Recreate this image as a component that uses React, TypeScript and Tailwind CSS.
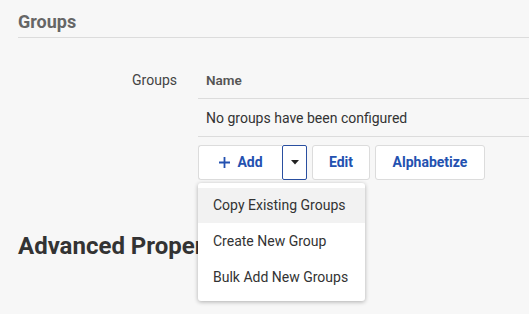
import React from "react";

export default function App() {
  const font = { fontFamily: "Roboto, 'Noto Sans', sans-serif" };
  return (
    <div className="w-[529px] h-[314px] overflow-hidden bg-[#f7f7f7] relative" style={font}>
      <div className="pl-[18px] pt-[10px]">
        <div className="border-b border-[#dcdcdc] pb-[3px]">
          <h2 className="text-[18px] leading-[24px] font-bold text-[#666]">Groups</h2>
        </div>
        <div className="flex mt-[24px]">
          <div className="w-[159px] text-right text-[14px] leading-[20px] text-[#444] pt-[8px]">Groups</div>
          <div className="ml-[21px] flex-1">
            <div className="border-b border-[#dcdcdc] h-[37px] pl-[8px] pt-[8px] text-[13.5px] leading-[20px] font-semibold text-[#555]">
              Name
            </div>
            <div className="border-b border-[#dcdcdc] h-[38px] pl-[8px] pt-[9px] text-[14px] leading-[20px] text-[#333]">
              No groups have been configured
            </div>
            <div className="flex mt-[8px] gap-[5px] relative">
              <div className="flex h-[35px]">
                <button className="w-[84px] h-[35px] bg-white border border-[#dcdcdc] border-r-0 rounded-l-[3px] flex items-center justify-center gap-[6px] text-[#2351b0] text-[14px] font-bold">
                  <svg width="13" height="13" viewBox="0 0 13 13"><path d="M6.5 1v11M1 6.5h11" stroke="#2351b0" strokeWidth="1.8" /></svg>
                  <span>Add</span>
                </button>
                <button className="w-[25px] h-[35px] bg-white border border-[#2a4fa0] rounded-[2px] flex items-center justify-center">
                  <svg width="8" height="5" viewBox="0 0 8 5"><path d="M0 0h8L4 4.5z" fill="#222" /></svg>
                </button>
              </div>
              <button className="w-[58px] h-[35px] bg-white border border-[#dcdcdc] rounded-[3px] text-[#2351b0] text-[14px] font-bold">Edit</button>
              <button className="w-[110px] h-[35px] bg-white border border-[#dcdcdc] rounded-[3px] text-[#2351b0] text-[14px] font-bold">Alphabetize</button>
              <div className="absolute left-0 top-[38px] w-[167px] bg-white rounded-[3px] shadow-[0_1px_4px_rgba(0,0,0,0.3)] pt-[5px] pb-[6px] z-10">
                <div className="h-[35px] bg-[#f2f2f2] pl-[15px] flex items-center text-[14px] text-[#333]">Copy Existing Groups</div>
                <div className="h-[36px] pl-[15px] flex items-center text-[14px] text-[#333]">Create New Group</div>
                <div className="h-[36px] pl-[15px] flex items-center text-[14px] text-[#333]">Bulk Add New Groups</div>
              </div>
            </div>
          </div>
        </div>
        <h2 className="mt-[51px] text-[24px] leading-[30px] font-bold text-[#333] whitespace-nowrap">Advanced Properties</h2>
      </div>
    </div>
  );
}
